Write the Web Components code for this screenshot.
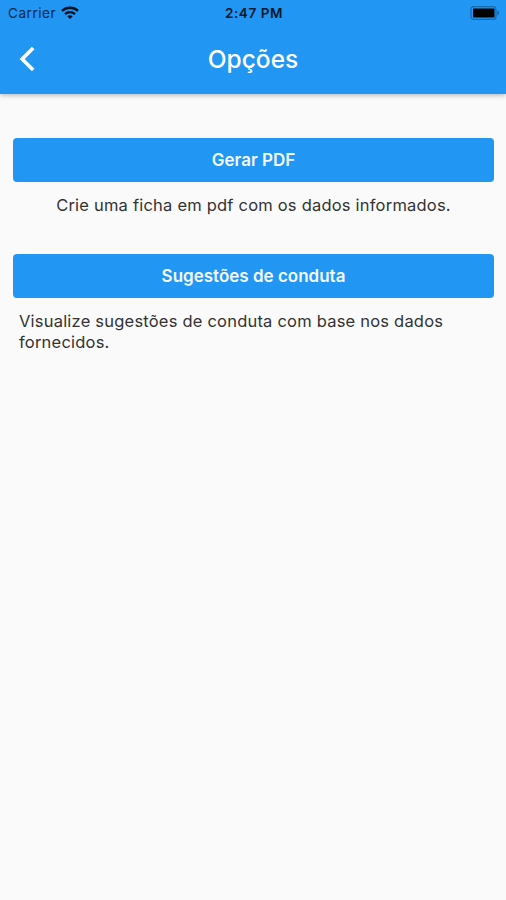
<!DOCTYPE html>
<html lang="pt-BR">
<head>
<meta charset="utf-8">
<title>Opções</title>
<style>
  body {
    margin: 0;
    background: #fafafa;
    font-family: Inter, "Liberation Sans", sans-serif;
  }
</style>
</head>
<body>

<options-page></options-page>

<script>
class StatusBar extends HTMLElement {
  constructor() {
    super();
    this.attachShadow({ mode: "open" });
  }
  connectedCallback() {
    const carrier = this.getAttribute("data-carrier");
    const time = this.getAttribute("data-time");

    this.shadowRoot.innerHTML = `
      <style>
        :host {
          display: grid;
          grid-template-columns: 1fr auto 1fr;
          align-items: center;
          height: 26px;
          padding: 0 6px 0 8px;
          box-sizing: border-box;
          color: #0b2b47;
          font-size: 13.5px;
          line-height: 16px;
        }
        .left {
          display: flex;
          align-items: center;
          gap: 5px;
        }
        .carrier {
          letter-spacing: 0.55px;
        }
        .time {
          color: #06182a;
          font-weight: 600;
          font-size: 13.5px;
          letter-spacing: 0.6px;
        }
        .wifi {
          margin-top: -2px;
        }
        .battery {
          justify-self: end;
        }
        svg {
          display: block;
        }
      </style>
      <div class="left">
        <span class="carrier">${carrier}</span>
        <svg class="wifi" width="18" height="13" viewBox="0 0 18 13" fill="none" stroke="#04121f" stroke-width="2.3">
          <path d="M1 4.9C5.4 .7 12.6 .7 17 4.9"/>
          <path d="M4 8.1C6.8 5.4 11.2 5.4 14 8.1"/>
          <path d="M9 13L6.3 10.3C7.8 8.9 10.2 8.9 11.7 10.3Z" fill="#04121f" stroke="none"/>
        </svg>
      </div>
      <span class="time">${time}</span>
      <svg class="battery" width="30" height="14" viewBox="0 0 30 14">
        <rect x="1" y=".5" width="25" height="13" rx="3" fill="none" stroke="#176aad" stroke-width="1.3"/>
        <rect x="3" y="2.5" width="21.5" height="9" rx=".8" fill="#000"/>
        <path d="M27.5 4.6C29.2 5.2 29.2 8.8 27.5 9.4Z" fill="#14568c"/>
      </svg>
    `;
  }
}

class AppBar extends HTMLElement {
  constructor() {
    super();
    this.attachShadow({ mode: "open" });
    this.shadowRoot.innerHTML = `
      <style>
        :host {
          display: block;
          height: 93.5px;
          background: #2196f3;
          box-shadow: 0 1px 5px rgba(0, 0, 0, 0.3);
        }
        .toolbar {
          display: grid;
          grid-template-columns: 56px 1fr 56px;
          align-items: center;
          height: 66px;
        }
        .back {
          display: block;
          margin: 0 0 0 19px;
        }
        h1 {
          margin: 0;
          color: #fff;
          font-size: 24.5px;
          font-weight: 500;
          line-height: 30px;
          text-align: center;
        }
      </style>
      <slot name="status"></slot>
      <div class="toolbar">
        <svg class="back" width="17" height="26" viewBox="0 0 17 26" fill="none" stroke="#fff" stroke-width="3.6">
          <path d="M14.2 2L3.2 13L14.2 24"/>
        </svg>
        <h1><slot></slot></h1>
      </div>
    `;
  }
}

class OptionItem extends HTMLElement {
  constructor() {
    super();
    this.attachShadow({ mode: "open" });
  }
  connectedCallback() {
    const label = this.getAttribute("data-label");

    this.shadowRoot.innerHTML = `
      <style>
        :host {
          display: flex;
          flex-direction: column;
          align-items: center;
        }
        button {
          align-self: stretch;
          height: 44px;
          padding: 0;
          border: 0;
          border-radius: 4px;
          background: #2196f3;
          color: #f3faff;
          font-family: inherit;
          font-size: 17px;
          font-weight: 600;
        }
        p {
          margin: 13.5px 6px 0;
          color: #333;
          font-size: 16.5px;
          line-height: 20.7px;
          letter-spacing: 0.21px;
        }
      </style>
      <button type="button">${label}</button>
      <p><slot></slot></p>
    `;
  }
}

class OptionsPage extends HTMLElement {
  constructor() {
    super();
    this.attachShadow({ mode: "open" });
    this.shadowRoot.innerHTML = `
      <style>
        :host {
          display: block;
          min-height: 900px;
        }
        main {
          display: flex;
          flex-direction: column;
          gap: 38px;
          padding: 44px 12px 0 13px;
        }
      </style>
      <app-bar>
        <status-bar slot="status" data-carrier="Carrier" data-time="2:47 PM"></status-bar>
        Opções
      </app-bar>
      <main>
        <option-item data-label="Gerar PDF">Crie uma ficha em pdf com os dados informados.</option-item>
        <option-item data-label="Sugestões de conduta">Visualize sugestões de conduta com base nos dados fornecidos.</option-item>
      </main>
    `;
  }
}

window.customElements.define("status-bar", StatusBar);
window.customElements.define("app-bar", AppBar);
window.customElements.define("option-item", OptionItem);
window.customElements.define("options-page", OptionsPage);
</script>
</body>
</html>
